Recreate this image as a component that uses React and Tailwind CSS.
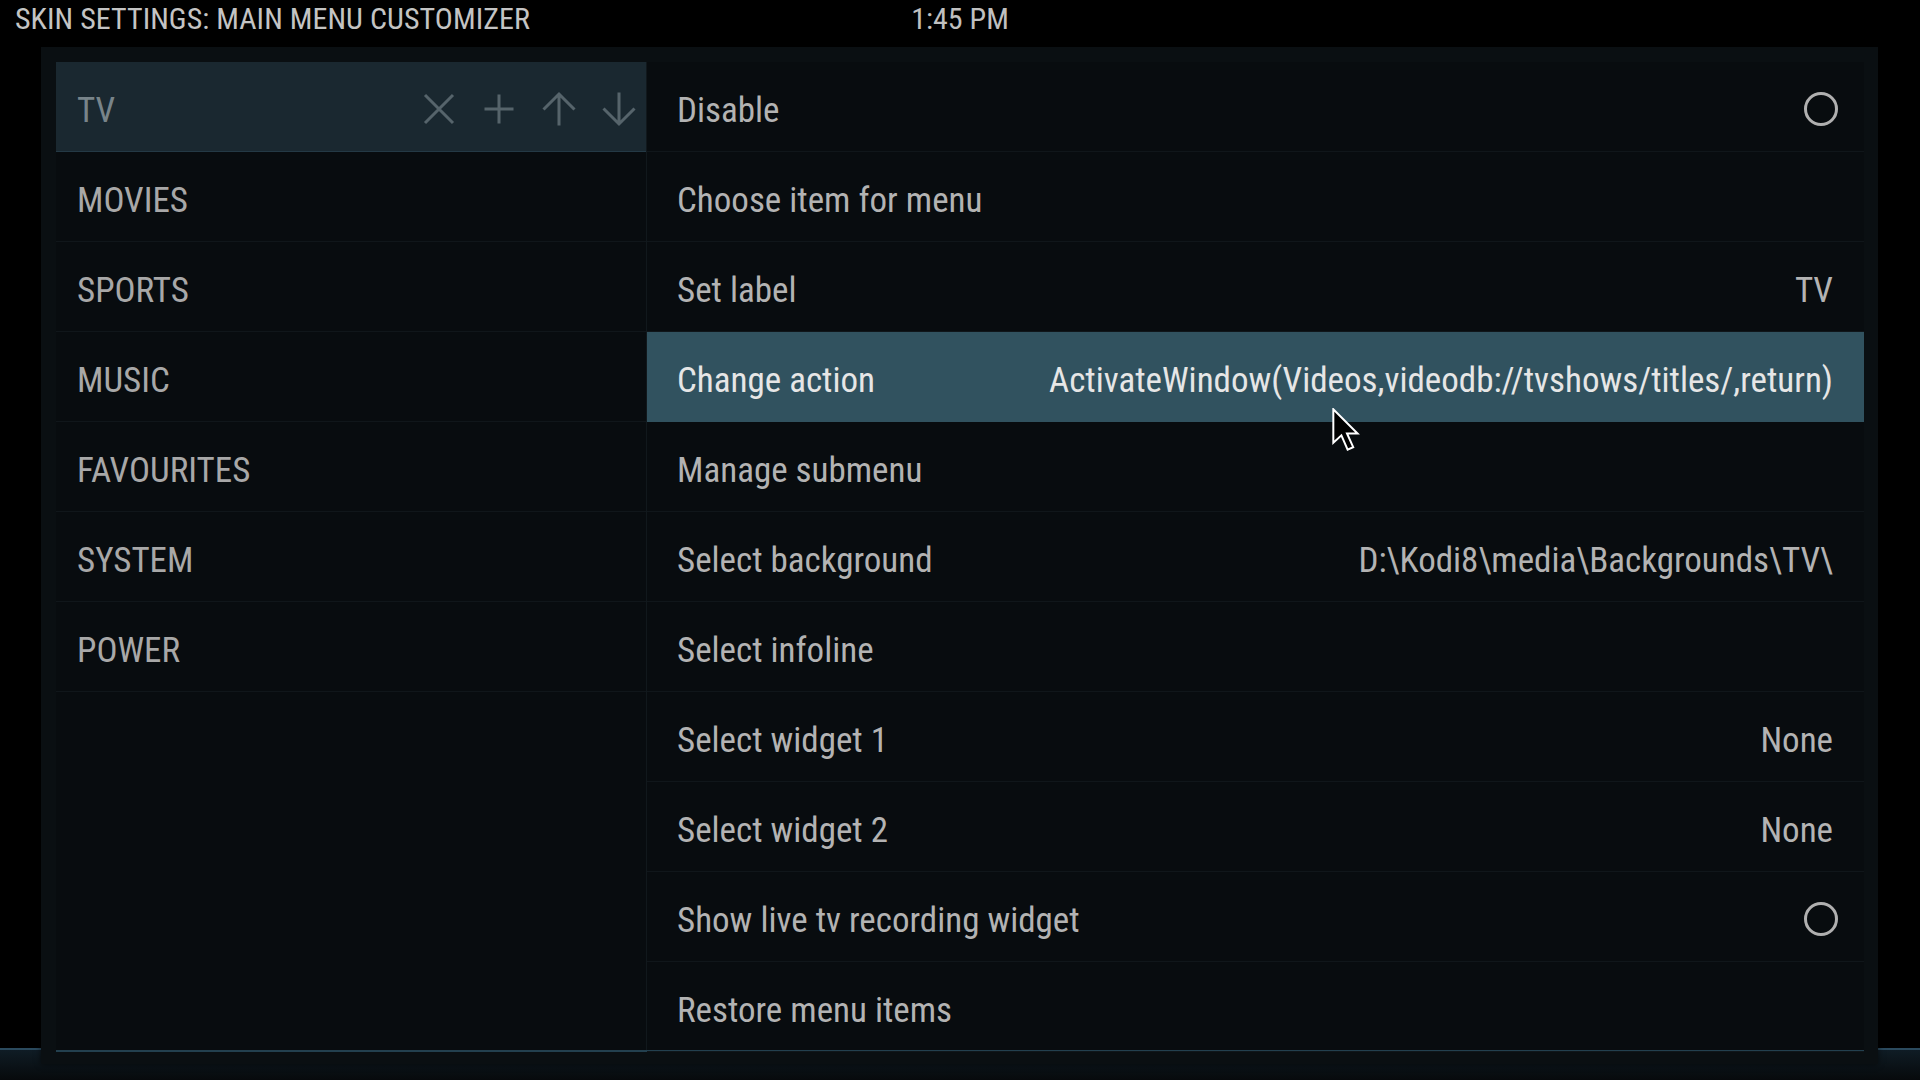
import React from 'react';

const font = { fontFamily: '"Roboto Condensed", "Liberation Sans Narrow", "DejaVu Sans Condensed", Roboto, sans-serif' };

const menuItems = ['TV', 'MOVIES', 'SPORTS', 'MUSIC', 'FAVOURITES', 'SYSTEM', 'POWER'];

const settings = [
  { label: 'Disable', toggle: true },
  { label: 'Choose item for menu' },
  { label: 'Set label', value: 'TV' },
  { label: 'Change action', value: 'ActivateWindow(Videos,videodb://tvshows/titles/,return)', active: true },
  { label: 'Manage submenu' },
  { label: 'Select background', value: 'D:\\Kodi8\\media\\Backgrounds\\TV\\' },
  { label: 'Select infoline' },
  { label: 'Select widget 1', value: 'None' },
  { label: 'Select widget 2', value: 'None' },
  { label: 'Show live tv recording widget', toggle: true },
  { label: 'Restore menu items' },
];

const Icon = ({ d }) => (
  <svg width="36" height="36" viewBox="0 0 36 36" fill="none" stroke="#56646b" strokeWidth="3" strokeLinecap="butt">
    <path d={d} />
  </svg>
);

const Circle = () => (
  <svg width="36" height="36" viewBox="0 0 36 36" fill="none">
    <circle cx="18" cy="18" r="15.5" stroke="#b0b0b0" strokeWidth="3" />
  </svg>
);

const Cursor = () => (
  <svg className="absolute left-[1332px] top-[408px]" width="30" height="46" viewBox="0 0 24 37" fill="none">
    <path d="M1 1 L1 28 L7.5 22 L12.5 33.5 L17 31.5 L12 20.5 L20.5 20.5 Z" fill="#000" stroke="#fff" strokeWidth="1.6" strokeLinejoin="miter" />
  </svg>
);

export default function App() {
  return (
    <div className="relative w-[1920px] h-[1080px] bg-black overflow-hidden font-stretch-condensed" style={font}>
      {/* bottom glow band */}
      <div className="absolute left-0 right-0 top-[1048px] bottom-0 border-t-2 border-[#2b4a5e] bg-gradient-to-b from-[#0f1c25] to-[#070a0c]" />

      {/* header */}
      <div className="relative grid grid-cols-[1fr_auto_1fr] items-center h-[47px] px-[15px] pb-[10px]">
        <div className="text-[30px] leading-none text-[#c4c4c4] tracking-[0.002em]">SKIN SETTINGS: MAIN MENU CUSTOMIZER</div>
        <div className="text-[30px] leading-none text-[#c0c0c0]">1:45 PM</div>
        <div />
      </div>

      {/* panel */}
      <div className="relative ml-[41px] w-[1837px] h-[1017px] bg-[#0a0f12] pt-[15px] pl-[15px] pr-[14px] shadow-[0_0_6px_rgba(0,0,0,0.6)]">
        <div className="flex h-[990px] border-b-2 border-[#23404f]">
          {/* left menu */}
          <div className="w-[591px] flex flex-col bg-[#080c0f] border-r border-[#11181c]">
            {menuItems.map((item, i) => (
              <div
                key={item}
                className={`h-[90px] flex items-center pt-[8px] pl-[21px] pr-[9px] border-b ${i === 0 ? 'bg-[#1a2830] border-[#243945]' : 'border-[#10161a]'}`}
              >
                <span className={`text-[35px] leading-none ${i === 0 ? 'text-[#78848a]' : 'text-[#a8a8a8]'}`}>{item}</span>
                {i === 0 && (
                  <div className="ml-auto -mt-[4px] flex items-center gap-[24px]">
                    <Icon d="M4 4 L32 32 M32 4 L4 32" />
                    <Icon d="M18 3.5 V32.5 M3.5 18 H32.5" />
                    <Icon d="M18 34.5 V3 M2.5 18.5 L18 3 L33.5 18.5" />
                    <Icon d="M18 1.5 V33 M2.5 17.5 L18 33 L33.5 17.5" />
                  </div>
                )}
              </div>
            ))}
          </div>

          {/* right settings */}
          <div className="flex-1 flex flex-col bg-[#080c0f]">
            {settings.map((s) => (
              <div
                key={s.label}
                className={`h-[90px] shrink-0 flex items-center pt-[8px] pl-[30px] pr-[31px] border-b ${s.active ? 'bg-[#31525f] border-[#31525f]' : 'border-[#10161a]'}`}
              >
                <span className={`text-[35px] leading-none ${s.active ? 'text-[#e6e6e6]' : 'text-[#b3b3b3]'}`}>{s.label}</span>
                {s.value && (
                  <span className={`ml-auto text-[35px] leading-none ${s.active ? 'text-[#e6e6e6]' : 'text-[#b3b3b3]'}`}>{s.value}</span>
                )}
                {s.toggle && (
                  <div className="ml-auto -mr-[6px] -mt-[4px]">
                    <Circle />
                  </div>
                )}
              </div>
            ))}
          </div>
        </div>
      </div>

      <Cursor />
    </div>
  );
}
